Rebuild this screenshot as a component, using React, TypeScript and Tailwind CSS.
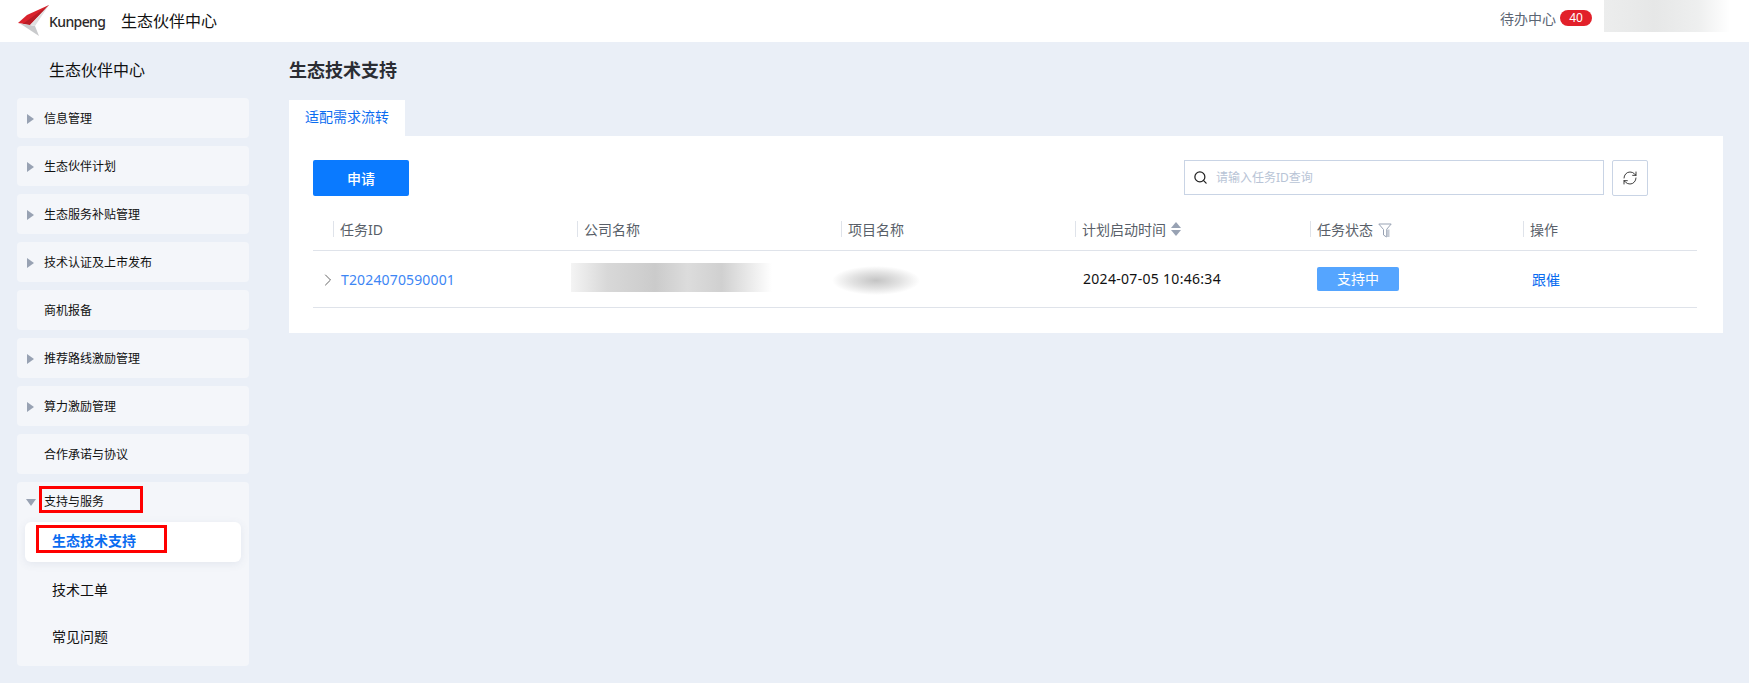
import { ChevronRight, RefreshCw, Search } from "lucide-react";

const FONT = "font-['Noto_Sans','Noto_Sans_CJK_SC',sans-serif]";

const MENU = [
  { label: "信息管理", arrow: true },
  { label: "生态伙伴计划", arrow: true },
  { label: "生态服务补贴管理", arrow: true },
  { label: "技术认证及上市发布", arrow: true },
  { label: "商机报备", arrow: false },
  { label: "推荐路线激励管理", arrow: true },
  { label: "算力激励管理", arrow: true },
  { label: "合作承诺与协议", arrow: false },
];

function Logo() {
  return (
    <svg width="31" height="32" viewBox="0 0 31 32" className="shrink-0">
      <path d="M31 0 L9 10 L0 18 L12 20 Z" fill="#d9222c" />
      <path d="M31 0 L12 20 L5 18.8 Z" fill="#b81c25" />
      <path d="M2 18.5 L12 20 L17 21 L21 31 Z" fill="#c9cacc" />
      <path d="M31 0 L12 20 L17 21 Z" fill="#dfe0e1" />
    </svg>
  );
}

function Header() {
  return (
    <header className="h-[42px] bg-white flex items-center pl-[18px] pr-[19px]">
      <Logo />
      <span className="ml-[0px] text-[14px] font-medium text-[#2c2a2b] tracking-[-0.6px] w-[72px]">Kunpeng</span>
      <span className="text-[16px] text-[#111] leading-none">生态伙伴中心</span>
      <div className="ml-auto flex items-start self-start h-[32px]">
        <span className="text-[14px] leading-[38px] text-[#5b6573]">待办中心</span>
        <span className="mt-[10px] ml-[4px] w-[32px] h-[16px] rounded-full bg-[#e2202a] text-white text-[12px] leading-[16px] text-center">
          40
        </span>
        <div className="ml-[12px] w-[126px] h-[32px] bg-[linear-gradient(90deg,#eceded_0%,#e6e7e7_40%,#eeefef_75%,#ffffff_100%)]" />
      </div>
    </header>
  );
}

function Sidebar() {
  return (
    <aside className="w-[289px] shrink-0 pl-[17px] pr-[40px]">
      <div className="h-[56px] pl-[32px] pt-[16px] text-[16px] leading-[24px] text-[#111]">生态伙伴中心</div>
      <div className="flex flex-col gap-[8px]">
        {MENU.map((item) => (
          <div key={item.label} className="h-[40px] rounded-[4px] bg-[#f4f6fa] flex items-center pl-[10px] pt-[2px]">
            <span className="w-[17px] flex">
              {item.arrow && (
                <span className="w-0 h-0 border-y-[5px] border-y-transparent border-l-[7px] border-l-[#98a2b3]" />
              )}
            </span>
            <span className="text-[12px] text-[#111]">{item.label}</span>
          </div>
        ))}
        <div className="h-[184px] rounded-[4px] bg-[#f4f6fa] px-[8px]">
          <div className="h-[40px] flex items-center pl-[1px]">
            <span className="w-[18px] flex">
              <span className="w-0 h-0 border-x-[5px] border-x-transparent border-t-[7px] border-t-[#98a2b3]" />
            </span>
            <span className="text-[12px] text-[#111]">支持与服务</span>
          </div>
          <div className="h-[40px] rounded-[6px] bg-white shadow-[0_2px_8px_rgba(80,100,140,0.1)] flex items-center pl-[27px] pb-[3px] text-[14px] font-bold text-[#0a6cf0]">
            生态技术支持
          </div>
          <div className="h-[48px] mt-[4px] flex items-center pl-[27px] pb-[2px] text-[14px] text-[#111]">技术工单</div>
          <div className="h-[48px] flex items-center pl-[27px] pb-[3px] text-[14px] text-[#111]">常见问题</div>
        </div>
      </div>
    </aside>
  );
}

function HeadCell({ children }: { children: React.ReactNode }) {
  return (
    <div className="h-[16px] border-l-[1px] border-[#dfe3ea] pl-[6px] flex items-center gap-[5px] text-[14px] text-[#595f69] whitespace-nowrap">
      {children}
    </div>
  );
}

function TaskTable() {
  return (
    <div className="mt-[20px] grid grid-cols-[20px_244px_264px_234px_235px_213px_174px] text-[14px]">
      <div className="h-[35px] border-b border-[#dfe3ea]" />
      {[
        <HeadCell key="id">任务ID</HeadCell>,
        <HeadCell key="company">公司名称</HeadCell>,
        <HeadCell key="project">项目名称</HeadCell>,
        <HeadCell key="time">
          计划启动时间
          <span className="flex flex-col gap-[2px]">
            <span className="w-0 h-0 border-x-[5px] border-x-transparent border-b-[6px] border-b-[#98a2b3]" />
            <span className="w-0 h-0 border-x-[5px] border-x-transparent border-t-[6px] border-t-[#98a2b3]" />
          </span>
        </HeadCell>,
        <HeadCell key="status">
          任务状态
          <svg width="14" height="15" viewBox="0 0 14 15" fill="none" className="mt-[2px]">
            <path d="M0.8 1 H13.2 L8.5 6.5 V14 L5.5 12 V6.5 Z" stroke="#98a2b3" strokeWidth="1" />
            <rect x="8.5" y="6.5" width="3" height="7.5" fill="#c4cad4" />
          </svg>
        </HeadCell>,
        <HeadCell key="action">操作</HeadCell>,
      ].map((cell, i) => (
        <div key={i} className="h-[35px] border-b border-[#dfe3ea] pb-[13px] flex items-end pt-[3px]">
          {cell}
        </div>
      ))}

      <div className="h-[57px] border-b border-[#dfe3ea] flex items-center">
        <ChevronRight size={20} strokeWidth={1.1} className="text-[#555] shrink-0 ml-[5px] mt-[2px]" />
      </div>
      <div className="h-[57px] border-b border-[#dfe3ea] flex items-center pl-[8px] tracking-[0.15px] text-[#3d86f4]">
        T2024070590001
      </div>
      <div className="h-[57px] border-b border-[#dfe3ea] flex items-center pb-[3px]">
        <div className="ml-[-6px] w-[201px] h-[29px] bg-[linear-gradient(90deg,#f4f4f4_0%,#d8d8d8_18%,#cbcbcb_42%,#dcdcdc_58%,#d0d0d0_75%,#ffffff_100%)]" />
      </div>
      <div className="h-[57px] border-b border-[#dfe3ea] flex items-center pt-[3px]">
        <div className="ml-[-9px] w-[88px] h-[29px] bg-[radial-gradient(ellipse_closest-side,#c4c4c4_0%,#e2e2e2_55%,#ffffff_100%)]" />
      </div>
      <div className="h-[57px] border-b border-[#dfe3ea] flex items-center pl-[8px] pb-[2px] tracking-[0.3px] text-[#111] whitespace-nowrap">
        2024-07-05 10:46:34
      </div>
      <div className="h-[57px] border-b border-[#dfe3ea] flex items-center pl-[7px]">
        <span className="w-[82px] h-[24px] rounded-[2px] bg-[#55a5ff] text-white text-center leading-[24px]">支持中</span>
      </div>
      <div className="h-[57px] border-b border-[#dfe3ea] flex items-center pl-[9px] text-[#0a6cf0]">跟催</div>
    </div>
  );
}

function Main() {
  return (
    <main className="w-[1434px] shrink-0">
      <h1 className="h-[58px] pt-[15px] text-[18px] leading-[26px] font-bold text-[#2b2d33]">生态技术支持</h1>
      <div className="w-[116px] h-[36px] bg-white flex items-center justify-center text-[14px] text-[#0a6cf0] pb-[3px]">
        适配需求流转
      </div>
      <section className="h-[197px] bg-white pl-[24px] pr-[25px] pt-[24px]">
        <div className="flex">
          <button className="w-[96px] h-[36px] rounded-[2px] bg-[#0a7aff] text-white text-[14px] font-medium">申请</button>
          <div className="ml-[775px] w-[420px] h-[35px] border-[1.5px] border-[#c9d4e5] flex items-center pl-[8px]">
            <Search size={15} strokeWidth={2} className="text-[#222] shrink-0" />
            <span className="ml-[8px] text-[12px] text-[#b8c4d6]">请输入任务ID查询</span>
          </div>
          <div className="ml-[8px] w-[36px] h-[36px] rounded-[2px] border border-[#c9d4e5] flex items-center justify-center">
            <RefreshCw size={16} strokeWidth={1.3} className="text-[#222]" />
          </div>
        </div>
        <TaskTable />
      </section>
    </main>
  );
}

export default function App() {
  return (
    <div className={`${FONT} relative w-[1749px] h-[683px] overflow-hidden bg-[#eaeff7]`}>
      <Header />
      <div className="flex">
        <Sidebar />
        <Main />
      </div>
      {/* annotation boxes drawn on top of the screenshot */}
      <div className="absolute left-[39px] top-[486px] w-[104px] h-[27px] border-[3px] border-[#ff0000]" />
      <div className="absolute left-[36px] top-[525px] w-[131px] h-[28px] border-[3px] border-[#ff0000]" />
    </div>
  );
}
